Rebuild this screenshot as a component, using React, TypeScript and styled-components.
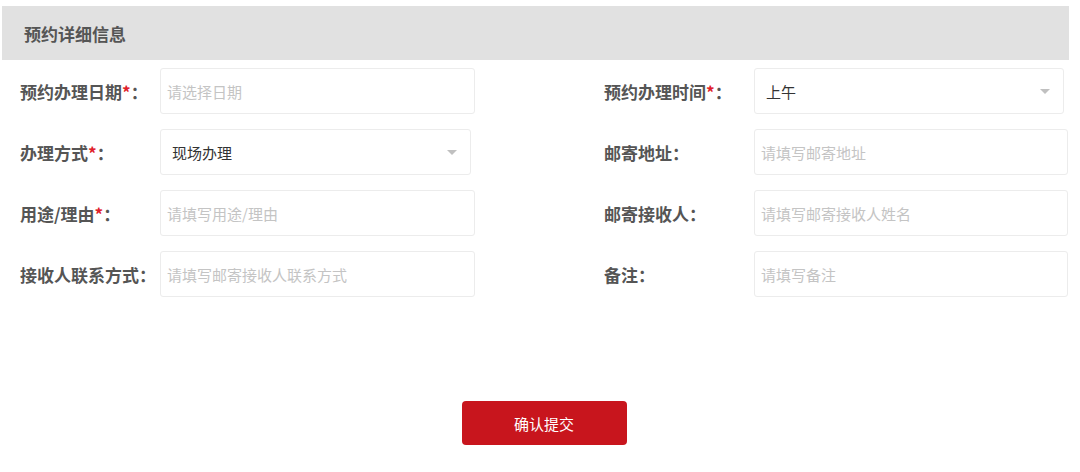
import React from 'react';
import styled, { createGlobalStyle } from 'styled-components';

const GlobalStyle = createGlobalStyle`
  html, body {
    margin: 0;
    padding: 0;
    background: #fff;
  }
  body {
    font-family: "Noto Sans CJK SC", "Noto Sans", sans-serif;
  }
`;

type Field = {
  label: string;
  required?: boolean;
  kind: 'input' | 'select';
  placeholder?: string;
  value?: string;
  narrow?: boolean;
};

const left: Field[] = [
  { label: '预约办理日期', required: true, kind: 'input', placeholder: '请选择日期' },
  { label: '办理方式', required: true, kind: 'select', value: '现场办理', narrow: true },
  { label: '用途/理由', required: true, kind: 'input', placeholder: '请填写用途/理由' },
  { label: '接收人联系方式', kind: 'input', placeholder: '请填写邮寄接收人联系方式' },
];

const right: Field[] = [
  { label: '预约办理时间', required: true, kind: 'select', value: '上午', narrow: true },
  { label: '邮寄地址', kind: 'input', placeholder: '请填写邮寄地址' },
  { label: '邮寄接收人', kind: 'input', placeholder: '请填写邮寄接收人姓名' },
  { label: '备注', kind: 'input', placeholder: '请填写备注' },
];

const Page = styled.div`
  width: 1080px;
  height: 472px;
  padding-top: 6px;
  box-sizing: border-box;
`;

const Header = styled.div`
  margin: 0 11px 0 2px;
  height: 54px;
  background: #e1e1e1;
  display: flex;
  align-items: center;
  padding-left: 22px;
  font-size: 17px;
  font-weight: 700;
  color: #555;
`;

const Form = styled.div`
  display: grid;
  grid-template-columns: 455px 464px;
  column-gap: 129px;
  row-gap: 15px;
  margin-left: 20px;
  width: 1048px;
  padding-top: 8px;
`;

const Row = styled.div<{ $labelWidth: number }>`
  display: grid;
  grid-template-columns: ${(p) => p.$labelWidth}px 1fr;
  align-items: center;
`;

const Label = styled.div`
  display: flex;
  align-items: center;
  height: 46px;
  font-size: 17px;
  font-weight: 700;
  color: #555;
  white-space: nowrap;
`;

const Star = styled.span`
  color: #e0202a;
`;

const Box = styled.div<{ $select?: boolean; $narrow?: boolean }>`
  position: relative;
  height: 46px;
  width: ${(p) => (p.$narrow ? 'calc(100% - 4px)' : '100%')};
  box-sizing: border-box;
  border: 1px solid #ececec;
  border-radius: 3px;
  background: #fff;
  display: flex;
  align-items: center;
  padding-left: ${(p) => (p.$select ? '11px' : '6px')};
  font-size: 15px;
`;

const Placeholder = styled.span`
  color: #c4c4c4;
`;

const Value = styled.span`
  color: #333;
`;

const Caret = styled.span`
  position: absolute;
  right: 13px;
  top: 50%;
  margin-top: -2px;
  width: 0;
  height: 0;
  border-left: 5px solid transparent;
  border-right: 5px solid transparent;
  border-top: 5px solid #c0c0c0;
`;

const Actions = styled.div`
  width: 1048px;
  margin-left: 20px;
  display: flex;
  justify-content: center;
  padding-top: 104px;
`;

const SubmitButton = styled.button`
  width: 165px;
  height: 44px;
  border: none;
  border-radius: 4px;
  background: #c8151d;
  color: #fff;
  font-family: inherit;
  font-size: 15px;
  cursor: pointer;
`;

const FieldRow: React.FC<{ field: Field; labelWidth: number }> = ({ field, labelWidth }) => (
  <Row $labelWidth={labelWidth}>
    <Label>
      {field.label}
      {field.required && <Star>*</Star>}：
    </Label>
    <Box $select={field.kind === 'select'} $narrow={field.narrow}>
      {field.kind === 'select' ? <Value>{field.value}</Value> : <Placeholder>{field.placeholder}</Placeholder>}
      {field.kind === 'select' && <Caret />}
    </Box>
  </Row>
);

export default function App() {
  return (
    <Page>
      <GlobalStyle />
      <Header>预约详细信息</Header>
      <Form>
        {left.map((f, i) => (
          <React.Fragment key={f.label}>
            <FieldRow field={f} labelWidth={140} />
            <FieldRow field={right[i]} labelWidth={150} />
          </React.Fragment>
        ))}
      </Form>
      <Actions>
        <SubmitButton>确认提交</SubmitButton>
      </Actions>
    </Page>
  );
}
